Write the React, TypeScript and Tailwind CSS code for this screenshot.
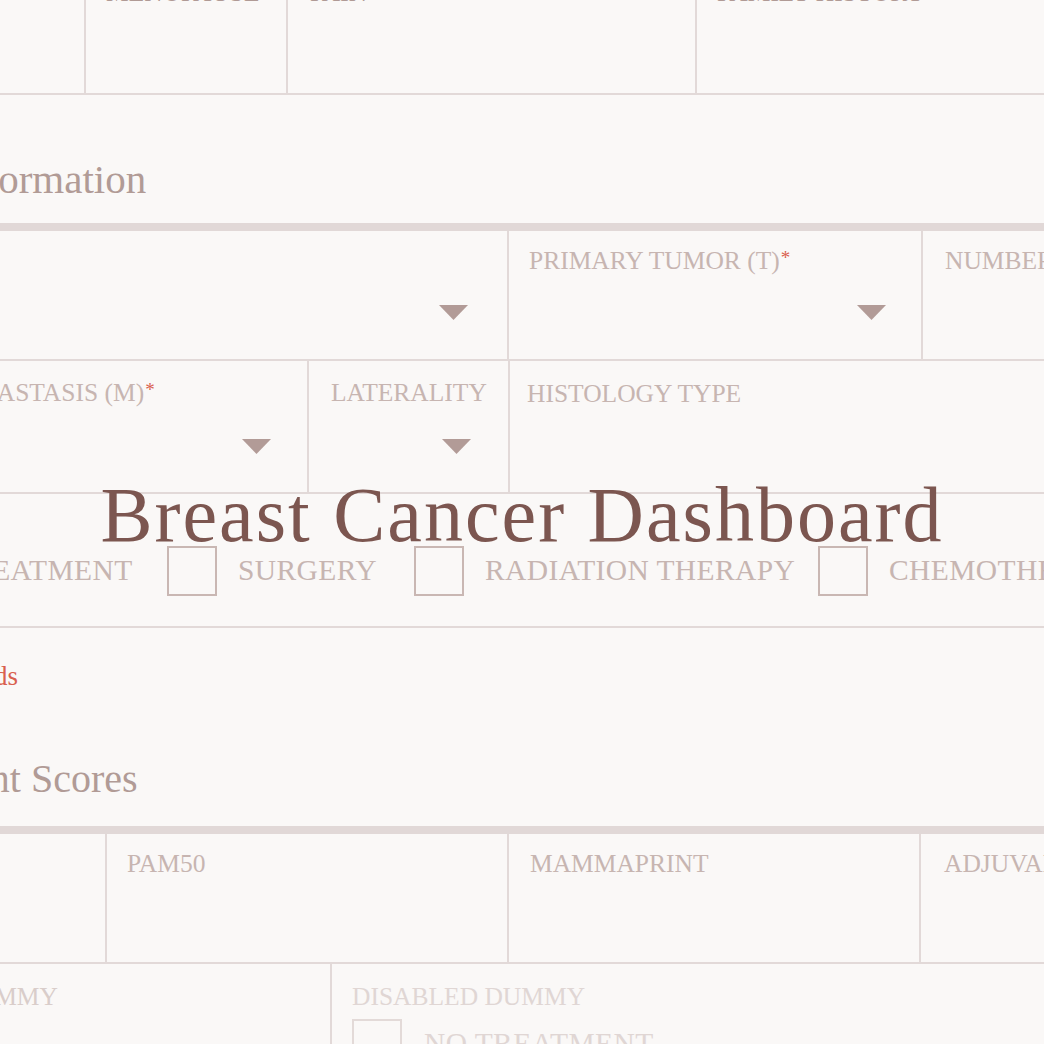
import React from "react";

const LINE = "border-[#e2d9d8]";

function Arrow() {
  return (
    <svg width="29" height="15" viewBox="0 0 29 15" className="block">
      <polygon points="0,0 29,0 14.5,15" fill="#b29b97" />
    </svg>
  );
}

function Req() {
  return <span className="text-[#d9604e] text-[19px] align-top ml-[1px]">*</span>;
}

function Label({ children, tone = "text-[#c7b5b1]" }: { children?: React.ReactNode; tone?: string }) {
  return <div className={`text-[25.5px] leading-none h-[25.5px] whitespace-nowrap ${tone}`}>{children}</div>;
}

function Box({ tone = "border-[#c9b7b3]" }: { tone?: string }) {
  return <div className={`w-[50px] h-[50px] border-2 shrink-0 ${tone}`} />;
}

export default function App() {
  return (
    <div className="w-[1044px] h-[1044px] overflow-hidden bg-[#faf8f7] relative font-['Liberation_Serif',serif]">
      <div className="w-[1500px] -ml-[200px] -mt-[34px] flex flex-col">
        {/* Patient row (mostly scrolled off) */}
        <div className={`flex h-[129px] border-b-2 ${LINE}`}>
          <div className="w-[284px] shrink-0" />
          <div className={`w-[202px] shrink-0 border-l-2 ${LINE} pl-[20px] pt-[14px]`}>
            <Label tone="text-[#b09a95]">MENOPAUSE</Label>
          </div>
          <div className={`w-[409px] shrink-0 border-l-2 ${LINE} pl-[22px] pt-[14px]`}>
            <Label tone="text-[#b09a95]">PAIN</Label>
          </div>
          <div className={`w-[500px] shrink-0 border-l-2 ${LINE} pl-[20px] pt-[14px]`}>
            <Label tone="text-[#b09a95]">FAMILY HISTORY</Label>
          </div>
        </div>

        {/* Tumor Information heading */}
        <div className="h-[128px] pl-[30px] pt-[64px]">
          <h2 className="text-[41px] leading-none text-[#b19b96] whitespace-nowrap">Tumor Information</h2>
        </div>
        <div className="h-[8px] bg-[#e1d8d7]" />

        {/* Row 1 */}
        <div className={`flex h-[130px] border-b-2 ${LINE}`}>
          <div className="w-[707px] shrink-0 flex flex-col pt-[17px] pr-[39px]">
            <Label />
            <div className="mt-[31px] flex justify-end">
              <Arrow />
            </div>
          </div>
          <div className={`w-[414px] shrink-0 border-l-2 ${LINE} flex flex-col pt-[17px] pl-[20px] pr-[35px]`}>
            <Label>
              PRIMARY TUMOR (T)<Req />
            </Label>
            <div className="mt-[31px] flex justify-end">
              <Arrow />
            </div>
          </div>
          <div className={`w-[400px] shrink-0 border-l-2 ${LINE} pt-[17px] pl-[22px]`}>
            <Label>NUMBER OF NODES</Label>
          </div>
        </div>

        {/* Row 2 */}
        <div className={`flex h-[133px] border-b-2 ${LINE}`}>
          <div className="w-[507px] shrink-0 flex flex-col pt-[19px] pl-[32px] pr-[36px]">
            <Label>
              DISTANT METASTASIS (M)<Req />
            </Label>
            <div className="mt-[33px] flex justify-end">
              <Arrow />
            </div>
          </div>
          <div className={`w-[201px] shrink-0 border-l-2 ${LINE} flex flex-col pt-[19px] pl-[22px] pr-[37px]`}>
            <Label>LATERALITY</Label>
            <div className="mt-[33px] flex justify-end">
              <Arrow />
            </div>
          </div>
          <div className={`w-[700px] shrink-0 border-l-2 ${LINE} pt-[20px] pl-[17px]`}>
            <Label>HISTOLOGY TYPE</Label>
          </div>
        </div>

        {/* Row 3: treatments */}
        <div className={`flex items-start h-[134px] border-b-2 ${LINE} pt-[52px] pl-[32px]`}>
          {[
            { w: "w-[335px]", t: "NO TREATMENT" },
            { w: "w-[247px]", t: "SURGERY" },
            { w: "w-[404px]", t: "RADIATION THERAPY" },
            { w: "w-[400px]", t: "CHEMOTHERAPY" },
          ].map((it) => (
            <div key={it.t} className={`${it.w} shrink-0 flex items-center`}>
              <Box />
              <span className="ml-[21px] text-[29.5px] leading-none tracking-[0.4px] text-[#c7b5b1] whitespace-nowrap">
                {it.t}
              </span>
            </div>
          ))}
        </div>

        {/* Required note + heading */}
        <div className="h-[198px] pl-[32px] pt-[35px] flex flex-col">
          <p className="text-[27px] leading-none text-[#d9604e] whitespace-nowrap">* Required fields</p>
          <h2 className="mt-[69px] text-[40px] leading-none text-[#b19b96] whitespace-nowrap">Assessment Scores</h2>
        </div>
        <div className="h-[8px] bg-[#e1d8d7]" />

        {/* Scores row */}
        <div className={`flex h-[130px] border-b-2 ${LINE}`}>
          <div className="w-[305px] shrink-0" />
          <div className={`w-[402px] shrink-0 border-l-2 ${LINE} pt-[17px] pl-[20px]`}>
            <Label>PAM50</Label>
          </div>
          <div className={`w-[412px] shrink-0 border-l-2 ${LINE} pt-[17px] pl-[21px]`}>
            <Label>MAMMAPRINT</Label>
          </div>
          <div className={`w-[400px] shrink-0 border-l-2 ${LINE} pt-[17px] pl-[23px]`}>
            <Label>ADJUVANT! ONLINE</Label>
          </div>
        </div>

        {/* Dummy row */}
        <div className="flex h-[140px]">
          <div className="w-[530px] shrink-0 pt-[20px] pl-[32px]">
            <Label tone="text-[#d9cdca]">ENABLED DUMMY</Label>
          </div>
          <div className={`w-[600px] shrink-0 border-l-2 ${LINE} pt-[20px] pl-[20px] flex flex-col`}>
            <Label tone="text-[#e0d6d4]">DISABLED DUMMY</Label>
            <div className="mt-[9px] flex items-center">
              <Box tone="border-[#e3dad8]" />
              <span className="ml-[22px] text-[29.5px] leading-none tracking-[0.4px] text-[#e0d6d4] whitespace-nowrap">
                NO TREATMENT
              </span>
            </div>
          </div>
        </div>
      </div>

      {/* Title overlay */}
      <h1 className="absolute left-0 right-0 top-[476px] text-center text-[78px] leading-none tracking-[2px] text-[#7c5650] whitespace-nowrap">
        Breast Cancer Dashboard
      </h1>
    </div>
  );
}
